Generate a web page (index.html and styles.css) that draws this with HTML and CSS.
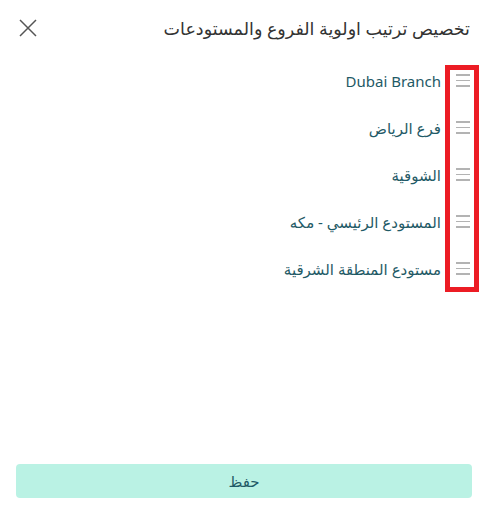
FILE: index.html
```html
<!DOCTYPE html>
<html lang="ar" dir="rtl">
<head>
<meta charset="utf-8">
<link rel="stylesheet" href="styles.css">
</head>
<body>
<div class="modal">
  <header class="head">
    <h1 class="title">تخصيص ترتيب اولوية الفروع والمستودعات</h1>
    <button class="close" aria-label="close">
      <svg width="18" height="18" viewBox="0 0 18 18"><path d="M1 1L17 17M17 1L1 17" stroke="#555" stroke-width="1.5" fill="none"/></svg>
    </button>
  </header>
  <div class="list">
    <div class="highlight"></div>
    <div class="row"><span class="handle"><i></i><i></i><i></i></span><span class="name">Dubai Branch</span></div>
    <div class="row"><span class="handle"><i></i><i></i><i></i></span><span class="name">فرع الرياض</span></div>
    <div class="row"><span class="handle"><i></i><i></i><i></i></span><span class="name">الشوقية</span></div>
    <div class="row"><span class="handle"><i></i><i></i><i></i></span><span class="name">المستودع الرئيسي - مكه</span></div>
    <div class="row"><span class="handle"><i></i><i></i><i></i></span><span class="name">مستودع المنطقة الشرقية</span></div>
  </div>
  <div class="spacer"></div>
  <button class="save">حفظ</button>
</div>
</body>
</html>
```

FILE: styles.css
```css
html, body {
  margin: 0;
  padding: 0;
  background: #fff;
}
body {
  font-family: "Noto Sans", "DejaVu Sans", sans-serif;
  width: 481px;
  height: 513px;
  overflow: hidden;
}
.modal {
  display: flex;
  flex-direction: column;
  height: 513px;
  box-sizing: border-box;
}
.head {
  display: flex;
  align-items: center;
  justify-content: space-between;
  height: 56px;
  padding: 0 11px 0 19px;
}
.title {
  margin: 0;
  font-size: 17.5px;
  font-weight: 400;
  color: #333;
}
.close {
  border: 0;
  background: none;
  padding: 0;
  width: 18px;
  height: 18px;
  display: flex;
}
.list {
  position: relative;
  display: flex;
  flex-direction: column;
  padding: 1px 0 0 0;
}
.row {
  display: flex;
  align-items: center;
  height: 47px;
  gap: 15px;
  padding-right: 11px;
}
.handle {
  width: 14px;
  display: flex;
  flex-direction: column;
  gap: 4px;
}
.handle i {
  display: block;
  height: 1.5px;
  background: #b3b3b3;
}
.name {
  font-size: 15px;
  color: #1f5a66;
}
.highlight {
  position: absolute;
  right: 2px;
  top: 9px;
  width: 34px;
  height: 227px;
  border: 5px solid #ec1c24;
  box-sizing: border-box;
}
.spacer { flex: 1; }
.save {
  margin: 0 9px 15px 16px;
  height: 34px;
  border: 0;
  border-radius: 4px;
  background: #baf2e4;
  color: #1f5a66;
  font-family: inherit;
  font-size: 15px;
}
```
